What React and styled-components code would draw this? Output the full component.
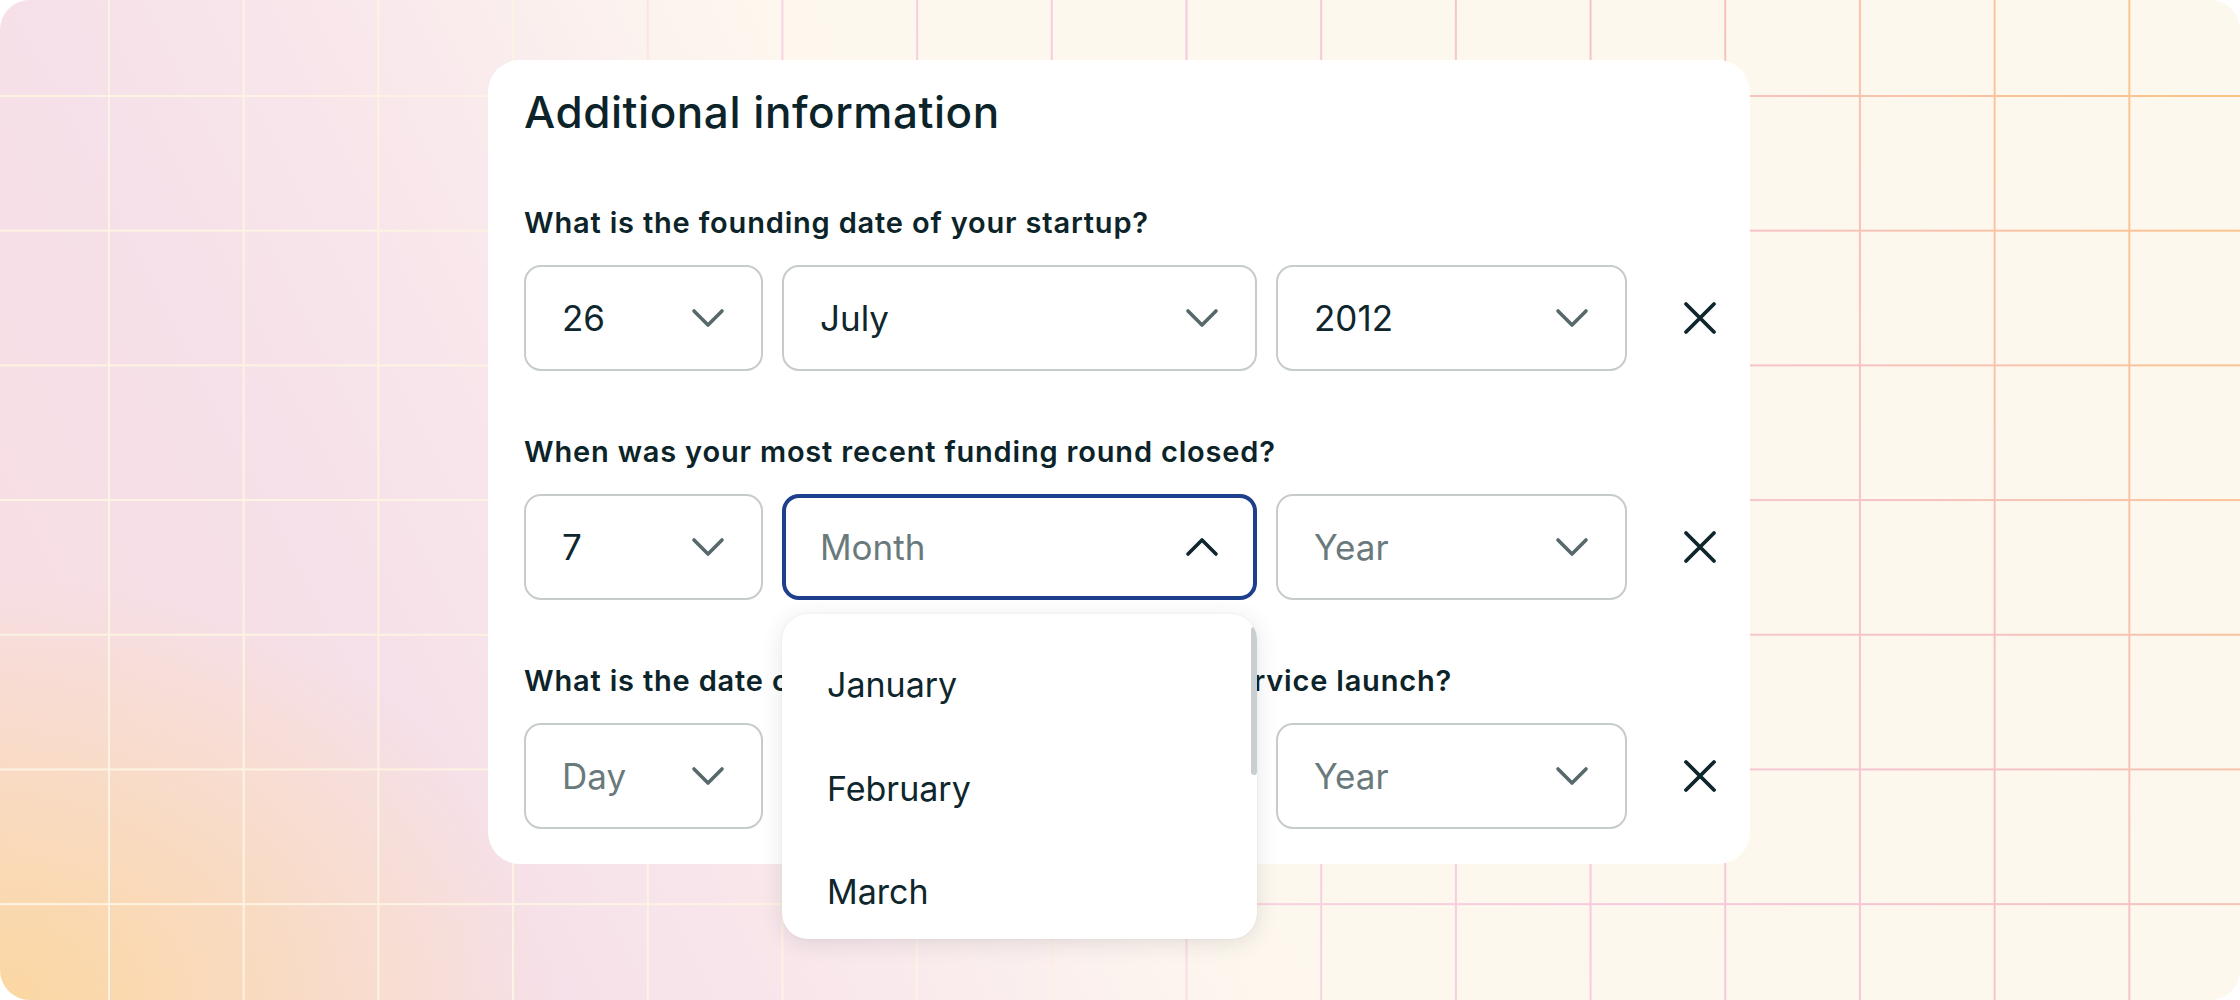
import React from 'react';
import styled, { createGlobalStyle } from 'styled-components';

const GlobalStyle = createGlobalStyle`
  html, body {
    margin: 0;
    padding: 0;
    background: #ffffff;
  }
  body {
    font-family: Inter, "Noto Sans", "Liberation Sans", sans-serif;
    color: #0e262c;
  }
`;

const MONTHS = ['January', 'February', 'March', 'April'];

const ChevronDown = ({ up, dark }) => (
  <svg width="34" height="20" viewBox="0 0 34 20" fill="none">
    <path
      d={up ? 'M3 17 L17 3 L31 17' : 'M3 3 L17 17 L31 3'}
      stroke={dark ? '#0e262c' : '#58696b'}
      strokeWidth="3.6"
      strokeLinecap="round"
      strokeLinejoin="round"
    />
  </svg>
);

const CloseIcon = () => (
  <svg width="34" height="34" viewBox="0 0 34 34" fill="none">
    <path
      d="M3 3 L31 31 M31 3 L3 31"
      stroke="#0e262c"
      strokeWidth="3.8"
      strokeLinecap="round"
    />
  </svg>
);

const Select = ({ value, placeholder, width, open }) => (
  <SelectBox $w={width} $open={open}>
    {value ? <Value>{value}</Value> : <Placeholder>{placeholder}</Placeholder>}
    <ChevronDown up={open} dark={open} />
  </SelectBox>
);

const DateRow = ({ day, month, year, monthOpen }) => (
  <Row>
    <Select value={day} placeholder="Day" width={239} />
    <MonthSlot>
      <Select value={month} placeholder="Month" width={475} open={monthOpen} />
      {monthOpen && (
        <Dropdown>
          {MONTHS.map(m => (
            <Option key={m}>{m}</Option>
          ))}
          <Thumb />
        </Dropdown>
      )}
    </MonthSlot>
    <Select value={year} placeholder="Year" width={351} />
    <ClearButton aria-label="Clear">
      <CloseIcon />
    </ClearButton>
  </Row>
);

const App = () => (
  <>
    <GlobalStyle />
    <Stage>
      <Card>
        <Title>Additional information</Title>
        <Field>
          <Label>What is the founding date of your startup?</Label>
          <DateRow day="26" month="July" year="2012" />
        </Field>
        <Field>
          <Label>When was your most recent funding round closed?</Label>
          <DateRow day="7" monthOpen />
        </Field>
        <Field>
          <Label>What is the date of your company's product or service launch?</Label>
          <DateRow />
        </Field>
      </Card>
    </Stage>
  </>
);

export default App;

const Stage = styled.div`
  position: relative;
  width: 2240px;
  height: 1000px;
  box-sizing: border-box;
  padding: 60px 0 0 488px;
  display: flex;
  align-items: flex-start;
  border-radius: 30px;
  overflow: hidden;
  background:
    radial-gradient(ellipse 560px 420px at 0% 100%, rgba(252, 214, 150, 0.85), rgba(252, 214, 150, 0) 100%),
    linear-gradient(63deg, #f7dde0 0%, #f6e0e9 20%, #f9e8ec 32%, #fbf0ee 39%, #fdf7ee 46%, #fdf8ee 100%);

  &::before {
    content: '';
    position: absolute;
    inset: 0;
    background: linear-gradient(63deg, #fdf3e2 0%, #fdf3e2 38%, #f8d2e2 46%, #f6c9de 62%, #f5c3c6 78%, #fbc39a 90%, #fdc584 100%);
    -webkit-mask-image:
      linear-gradient(to right, #000 2px, transparent 2px),
      linear-gradient(to bottom, #000 2px, transparent 2px);
    -webkit-mask-size: 134.7px 134.7px;
    -webkit-mask-position: 108px 95px;
    mask-image:
      linear-gradient(to right, #000 2px, transparent 2px),
      linear-gradient(to bottom, #000 2px, transparent 2px);
    mask-size: 134.7px 134.7px;
    mask-position: 108px 95px;
  }
`;

const Card = styled.div`
  position: relative;
  z-index: 1;
  width: 1262px;
  box-sizing: border-box;
  padding: 26px 20px 35px 36px;
  background: #ffffff;
  border-radius: 32px;
`;

const Title = styled.h2`
  margin: 0;
  font-size: 44px;
  line-height: 52px;
  font-weight: 500;
  letter-spacing: 0.55px;
  color: #0c2429;
`;

const Field = styled.section`
  margin-top: 63px;
  &:first-of-type {
    margin-top: 67px;
  }
`;

const Label = styled.div`
  font-size: 29px;
  line-height: 36px;
  font-weight: 600;
  letter-spacing: 0.82px;
  color: #0c2429;
  margin-bottom: 24px;
  white-space: nowrap;
`;

const Row = styled.div`
  display: flex;
  align-items: center;
  gap: 19px;
  & > * {
    flex-shrink: 0;
  }
`;

const MonthSlot = styled.div`
  position: relative;
`;

const SelectBox = styled.div`
  width: ${p => p.$w}px;
  height: 106px;
  box-sizing: border-box;
  display: flex;
  align-items: center;
  justify-content: space-between;
  padding: 0 ${p => (p.$open ? 34 : 36)}px 0 ${p => (p.$open ? 34 : 36)}px;
  border: ${p => (p.$open ? '4px solid #1d3f8c' : '2px solid #c6cbcc')};
  border-radius: 17px;
  background: #ffffff;
  font-size: 35px;
`;

const Value = styled.span`
  color: #0e262c;
  font-weight: 400;
`;

const Placeholder = styled.span`
  color: #6a7a7c;
  font-weight: 400;
`;

const ClearButton = styled.button`
  margin-left: 37px;
  padding: 0;
  border: none;
  background: none;
  display: flex;
  align-items: center;
  justify-content: center;
`;

const Dropdown = styled.div`
  position: absolute;
  z-index: 5;
  top: calc(100% + 14px);
  left: 0;
  width: 100%;
  height: 325px;
  box-sizing: border-box;
  padding-top: 19px;
  background: #ffffff;
  border-radius: 26px;
  overflow: hidden;
  box-shadow: 0 4px 22px rgba(40, 50, 60, 0.12), 0 0 2px rgba(40, 50, 60, 0.08);
`;

const Option = styled.div`
  height: 103.5px;
  display: flex;
  align-items: center;
  padding-left: 45px;
  font-size: 34px;
  color: #0e262c;
`;

const Thumb = styled.div`
  position: absolute;
  top: 13px;
  right: 0;
  width: 6px;
  height: 148px;
  border-radius: 3px;
  background: #c9ced0;
`;
